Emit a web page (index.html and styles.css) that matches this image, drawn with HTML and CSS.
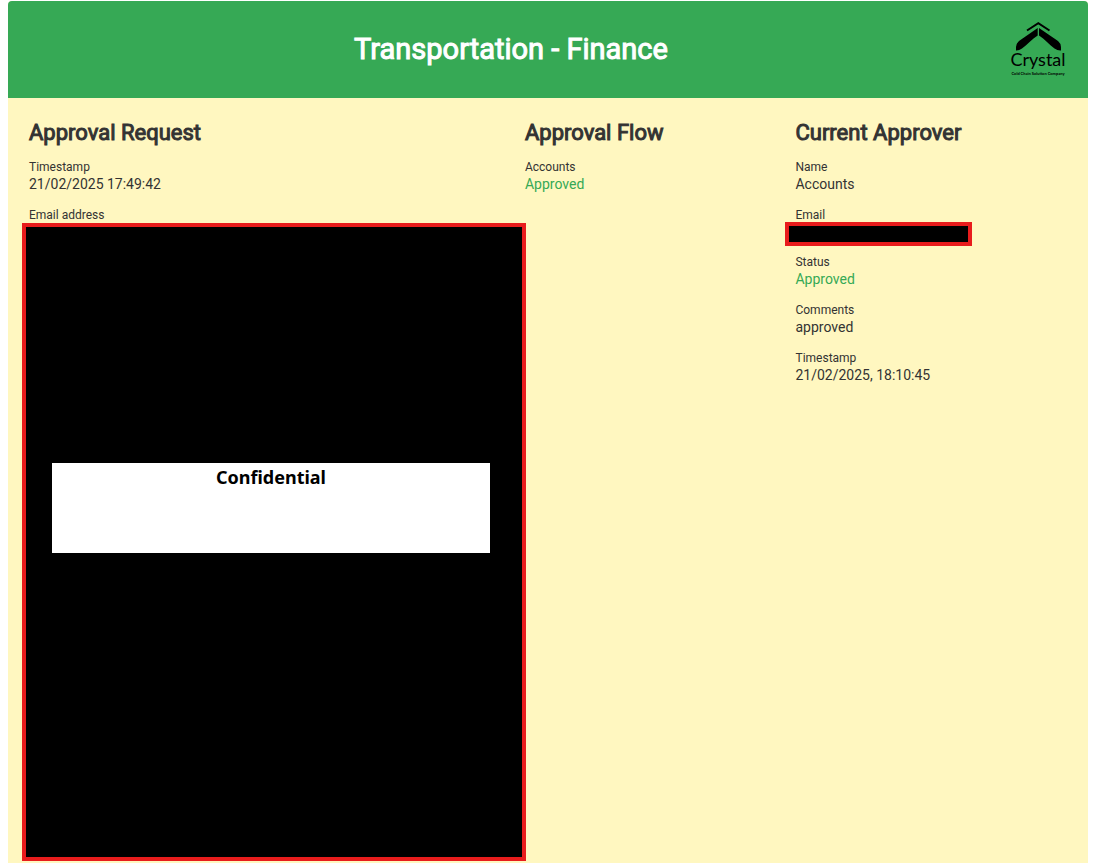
FILE: index.html
```html
<!DOCTYPE html>
<html lang="en">
<head>
<meta charset="utf-8">
<title>Transportation - Finance</title>
<link rel="stylesheet" href="styles.css">
</head>
<body>
<main class="card">
  <header class="banner">
    <h1 class="banner-title">Transportation - Finance</h1>
    <svg class="logo" viewBox="0 0 58 58" role="img" aria-label="Crystal Cold Chain Solution Company">
      <path class="logo-line" d="M18 10.500 29.300 3.200 40.500 10.500"/>
      <path d="M28.700 8V15.500C23 19 18 25 13 28.500Q10 30.700 7 30.500V27Q7 23.500 10 21Z"/>
      <path d="M30 8V15.500C35.700 19 40.500 25 45.500 28.500Q48.500 30.700 52 30.500V27Q52 23.500 49 21Z"/>
      <text class="logo-name" x="29" y="46">Crystal</text>
      <text class="logo-tag" x="29" y="55">Cold Chain Solution Company</text>
    </svg>
  </header>
  <div class="columns">
    <section>
      <h2 class="heading">Approval Request</h2>
      <dl class="fields">
        <div><dt>Timestamp</dt><dd>21/02/2025 17:49:42</dd></div>
        <div><dt>Email address</dt>
          <dd class="redacted redacted-block"><span class="notice">Confidential</span></dd></div>
      </dl>
    </section>
    <section>
      <h2 class="heading">Approval Flow</h2>
      <dl class="fields">
        <div><dt>Accounts</dt><dd class="approved">Approved</dd></div>
      </dl>
    </section>
    <section>
      <h2 class="heading">Current Approver</h2>
      <dl class="fields">
        <div><dt>Name</dt><dd>Accounts</dd></div>
        <div><dt>Email</dt><dd class="redacted redacted-line"></dd></div>
        <div><dt>Status</dt><dd class="approved">Approved</dd></div>
        <div><dt>Comments</dt><dd>approved</dd></div>
        <div><dt>Timestamp</dt><dd>21/02/2025, 18:10:45</dd></div>
      </dl>
    </section>
  </div>
</main>
</body>
</html>
```
FILE: styles.css
```css
* {
  box-sizing: border-box;
}

body {
  margin: 0;
  padding: 1px 11px 0 8px;
  background: #fff;
  color: #333;
  font-family: Roboto, "Liberation Sans", sans-serif;
}

.card {
  min-height: calc(100vh - 1px);
  overflow: hidden;
  border-radius: 4px 4px 0 0;
  background: #fff7c0;
}

.banner {
  display: grid;
  grid-template-columns: 1fr 58px;
  align-items: center;
  padding: 19px 21px 20px;
  background: #36a955;
}

.banner-title {
  margin: 0;
  padding-right: 16px;
  color: #fff;
  font-size: 29px;
  font-weight: 400;
  line-height: 40px;
  text-align: center;
  -webkit-text-stroke: 1px currentColor;
}

.logo {
  width: 58px;
  height: 58px;
}

.logo-line {
  fill: none;
  stroke: #000;
  stroke-width: 2;
}

.logo-name,
.logo-tag {
  font-family: Lato, sans-serif;
  text-anchor: middle;
}

.logo-name {
  font-size: 18px;
}

.logo-tag {
  font-size: 4px;
  font-weight: 700;
}

.columns {
  display: grid;
  grid-template-columns: 11fr 6fr 6fr;
  padding: 20px 22px 0 21px;
}

.heading {
  margin: 0 0 11px;
  font-size: 22px;
  font-weight: 400;
  line-height: 30px;
  -webkit-text-stroke: 1px currentColor;
}

.fields {
  display: grid;
  gap: 14px;
  margin: 0;
}

dt {
  font-size: 12px;
  line-height: 16px;
}

dd {
  margin: 0;
  font-size: 14px;
  line-height: 18px;
}

.approved {
  color: #36a955;
}

.redacted {
  border: 4px solid #e81c1c;
  background: #000;
}

.redacted-block {
  display: grid;
  align-items: center;
  height: 638px;
  margin: 0 -1px 0 -7px;
  padding: 0 32px 68px 26px;
}

.notice {
  min-height: 90px;
  background: #fff;
  color: #000;
  font-family: "Noto Sans", sans-serif;
  font-size: 18px;
  font-weight: 700;
  line-height: 28px;
  text-align: center;
}

.redacted-line {
  width: 187px;
  height: 24px;
  margin: -1px 0 -6px -10px;
}
```
